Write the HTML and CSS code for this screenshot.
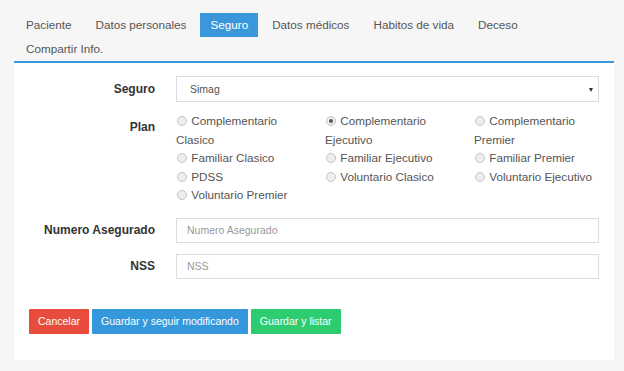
FILE: index.html
```html
<!DOCTYPE html>
<html lang="es">
<head>
    <meta charset="UTF-8">
    <meta name="viewport" content="width=device-width, initial-scale=1.0">
    <title>Seguro</title>
    <link rel="stylesheet" href="styles.css">
</head>
<body>
    <div class="page">
        <ul class="tabs">
            <li class="tab">Paciente</li>
            <li class="tab">Datos personales</li>
            <li class="tab active">Seguro</li>
            <li class="tab">Datos médicos</li>
            <li class="tab">Habitos de vida</li>
            <li class="tab">Deceso</li>
            <li class="tab">Compartir Info.</li>
        </ul>

        <div class="panel">
            <form class="form">
                <div class="row">
                    <label class="label">Seguro</label>
                    <div class="select">Simag</div>
                </div>

                <div class="row">
                    <label class="label label-top">Plan</label>
                    <div class="radios">
                        <div class="radio"><span class="dot"></span> Complementario Clasico</div>
                        <div class="radio"><span class="dot checked"></span> Complementario Ejecutivo</div>
                        <div class="radio"><span class="dot"></span> Complementario Premier</div>
                        <div class="radio"><span class="dot"></span> Familiar Clasico</div>
                        <div class="radio"><span class="dot"></span> Familiar Ejecutivo</div>
                        <div class="radio"><span class="dot"></span> Familiar Premier</div>
                        <div class="radio"><span class="dot"></span> PDSS</div>
                        <div class="radio"><span class="dot"></span> Voluntario Clasico</div>
                        <div class="radio"><span class="dot"></span> Voluntario Ejecutivo</div>
                        <div class="radio"><span class="dot"></span> Voluntario Premier</div>
                    </div>
                </div>

                <div class="row row-input">
                    <label class="label" for="numero">Numero Asegurado</label>
                    <input class="input" type="text" id="numero" placeholder="Numero Asegurado">
                </div>

                <div class="row">
                    <label class="label" for="nss">NSS</label>
                    <input class="input" type="text" id="nss" placeholder="NSS">
                </div>
            </form>

            <div class="actions">
                <button class="btn btn-red">Cancelar</button>
                <button class="btn btn-blue">Guardar y seguir modificando</button>
                <button class="btn btn-green">Guardar y listar</button>
            </div>
        </div>
    </div>
</body>
</html>
```

FILE: styles.css
```css
body {
    margin: 0;
    background-color: #f6f6f6;
    font-family: "Liberation Sans", Arial, sans-serif;
    font-size: 11.7px;
    color: #555;
}

.page {
    width: 600px;
    padding: 13px 0 12px 14px;
}

/* tabs */
.tabs {
    list-style: none;
    margin: 0;
    padding: 0 0 0 2px;
    display: flex;
    flex-wrap: wrap;
    border-bottom: 2px solid #3b97dc;
}

.tab {
    padding: 5px 10px;
    margin-right: 4px;
    line-height: 14px;
    color: #555;
}

.tab.active {
    background-color: #3b97dc;
    color: #fff;
}

/* panel */
.panel {
    background-color: #fff;
    padding: 13px 15px 26px 15px;
}

.row {
    display: grid;
    grid-template-columns: 126px 1fr;
    column-gap: 21px;
    align-items: center;
    margin-bottom: 10px;
}

.row-input {
    margin-bottom: 11px;
}

.label {
    text-align: right;
    font-weight: bold;
    font-size: 12px;
    color: #333;
    line-height: 18px;
}

.label-top {
    align-self: start;
    padding-top: 6px;
}

.select {
    position: relative;
    height: 24px;
    line-height: 24px;
    border: 1px solid #ddd;
    padding-left: 13px;
    font-size: 10.5px;
    color: #555;
}

.select::after {
    content: "";
    position: absolute;
    right: 5px;
    top: 11px;
    border-left: 2.5px solid transparent;
    border-right: 2.5px solid transparent;
    border-top: 4px solid #333;
}

.radios {
    display: grid;
    grid-template-columns: repeat(3, 149px);
    line-height: 18.6px;
    margin-bottom: 3px;
}

.radio {
    padding-right: 10px;
    color: #555;
}

.dot {
    display: inline-block;
    width: 8px;
    height: 8px;
    border: 1px solid #c4c4c4;
    border-radius: 50%;
    background-color: #eee;
    margin-left: 1px;
    margin-right: 1px;
    vertical-align: -1px;
    position: relative;
}

.dot.checked::after {
    content: "";
    position: absolute;
    left: 2px;
    top: 2px;
    width: 4px;
    height: 4px;
    border-radius: 50%;
    background-color: #555;
}

.input {
    height: 25px;
    box-sizing: border-box;
    border: 1px solid #ddd;
    padding: 0 10px;
    font-family: "Liberation Sans", Arial, sans-serif;
    font-size: 10.5px;
    color: #555;
    outline: none;
}

.input::placeholder {
    color: #999;
}

/* buttons */
.actions {
    display: flex;
    gap: 3px;
    margin-top: 30px;
}

.btn {
    height: 25px;
    padding: 0 9px;
    border: none;
    border-radius: 1px;
    color: #fff;
    font-family: "Liberation Sans", Arial, sans-serif;
    font-size: 10.5px;
    cursor: pointer;
}

.btn-red {
    background-color: #e74c3c;
}

.btn-blue {
    background-color: #3498db;
}

.btn-green {
    background-color: #2ecc71;
}
```
